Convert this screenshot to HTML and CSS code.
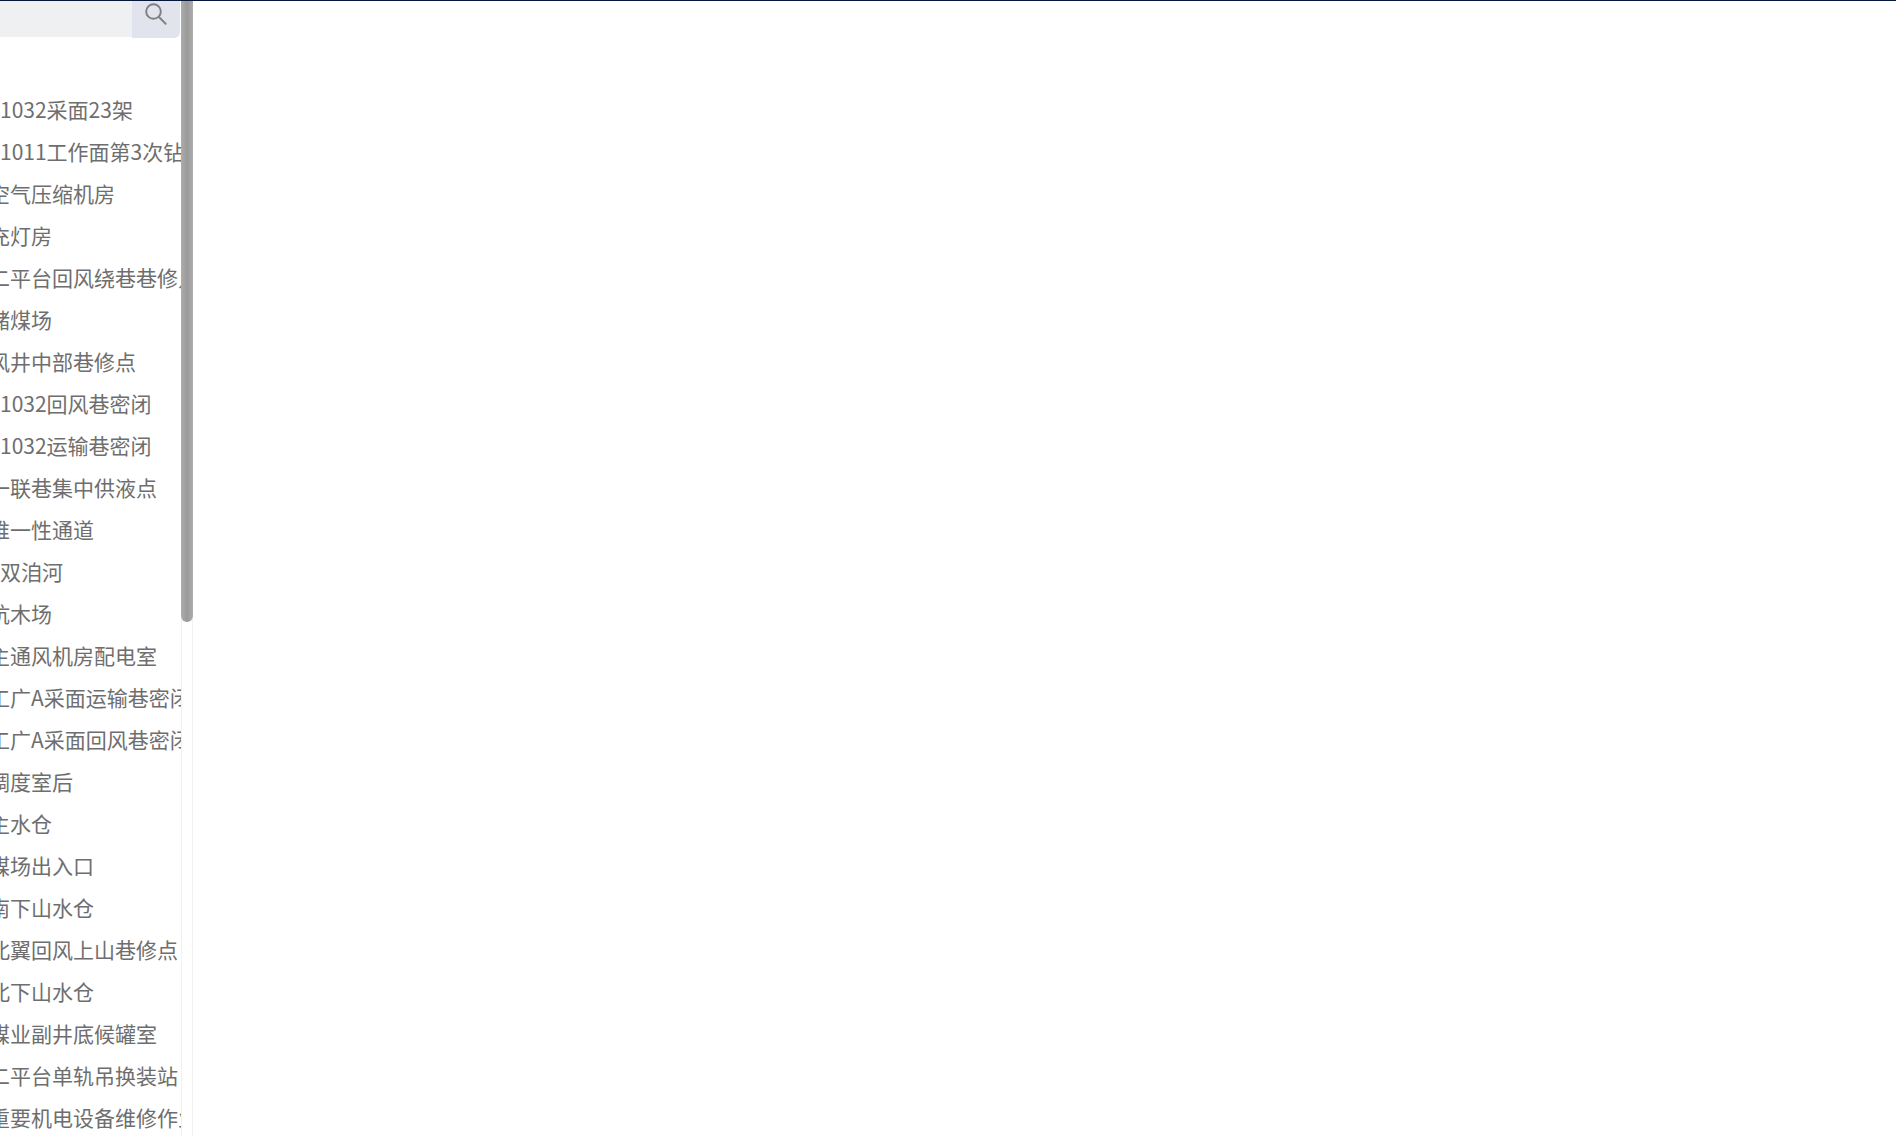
FILE: index.html
```html
<!DOCTYPE html>
<html lang="zh-CN">
<head>
    <meta charset="UTF-8">
    <meta name="viewport" content="width=device-width, initial-scale=1.0">
    <title>地点列表</title>
    <link rel="stylesheet" href="styles.css">
</head>
<body>
    <header class="topbar"></header>
    <div class="page">
        <aside class="sidebar">
            <form class="search">
                <input class="search-input" type="text" aria-label="搜索地点">
                <button class="search-btn" type="button" aria-label="搜索">
                    <svg width="24" height="24" viewBox="0 0 24 24" fill="none" stroke="#808080" stroke-width="2">
                        <circle cx="9.5" cy="9.5" r="7.3"/>
                        <path d="M14.7 14.7L22.2 22.4"/>
                    </svg>
                </button>
            </form>
            <ul class="places">
                <li class="number">1032采面23架</li>
                <li class="number">1011工作面第3次钻</li>
                <li>空气压缩机房</li>
                <li>充灯房</li>
                <li>二平台回风绕巷巷修点</li>
                <li>储煤场</li>
                <li>风井中部巷修点</li>
                <li class="number">1032回风巷密闭</li>
                <li class="number">1032运输巷密闭</li>
                <li>一联巷集中供液点</li>
                <li>唯一性通道</li>
                <li class="number">双洎河</li>
                <li>坑木场</li>
                <li>主通风机房配电室</li>
                <li>工广A采面运输巷密闭</li>
                <li>工广A采面回风巷密闭</li>
                <li>调度室后</li>
                <li>主水仓</li>
                <li>煤场出入口</li>
                <li>南下山水仓</li>
                <li>北翼回风上山巷修点</li>
                <li>北下山水仓</li>
                <li>煤业副井底候罐室</li>
                <li>二平台单轨吊换装站</li>
                <li>重要机电设备维修作业</li>
            </ul>
        </aside>
        <div class="scrollbar">
            <div class="scrollbar-thumb"></div>
        </div>
        <main class="content"></main>
    </div>
</body>
</html>
```

FILE: styles.css
```css
* {
    box-sizing: border-box;
}
body {
    margin: 0;
    height: 100vh;
    display: flex;
    flex-direction: column;
    overflow: hidden;
    background-color: #ffffff;
    color: #6e6e6e;
    font-family: "Noto Sans CJK SC", sans-serif;
    font-size: 21px;
}
.topbar {
    flex: none;
    height: 1px;
    background-color: #06163a;
}
.page {
    flex: 1;
    min-height: 0;
    display: flex;
}
.sidebar {
    flex: none;
    width: 181px;
    overflow: hidden;
}
.search {
    display: flex;
    align-items: flex-start;
    padding-right: 1px;
}
.search-input {
    flex: 1;
    min-width: 0;
    height: 36px;
    padding: 0 10px;
    border: 0;
    background-color: #eff0f2;
    font: inherit;
}
.search-btn {
    flex: none;
    width: 48px;
    height: 37px;
    padding: 0 0 12px;
    border: 0;
    border-bottom-right-radius: 6px;
    background-color: #e1e4ec;
    display: flex;
    align-items: center;
    justify-content: center;
}
.places {
    list-style: none;
    margin: 50px 0 0 -11px;
    padding: 0;
}
.places li {
    height: 42px;
    line-height: 42px;
    white-space: nowrap;
}
.places .number {
    padding-left: 11px;
}
.scrollbar {
    flex: none;
    width: 12px;
    border: solid #f1f1f1;
    border-width: 0 1px;
}
.scrollbar-thumb {
    height: 54.7%;
    margin: 0 -1px;
    border-radius: 0 0 6px 6px;
    background-image: linear-gradient(to right, #adadad, #9a9a9a 50%, #adadad);
}
.content {
    flex: 1;
    min-width: 0;
}
```
